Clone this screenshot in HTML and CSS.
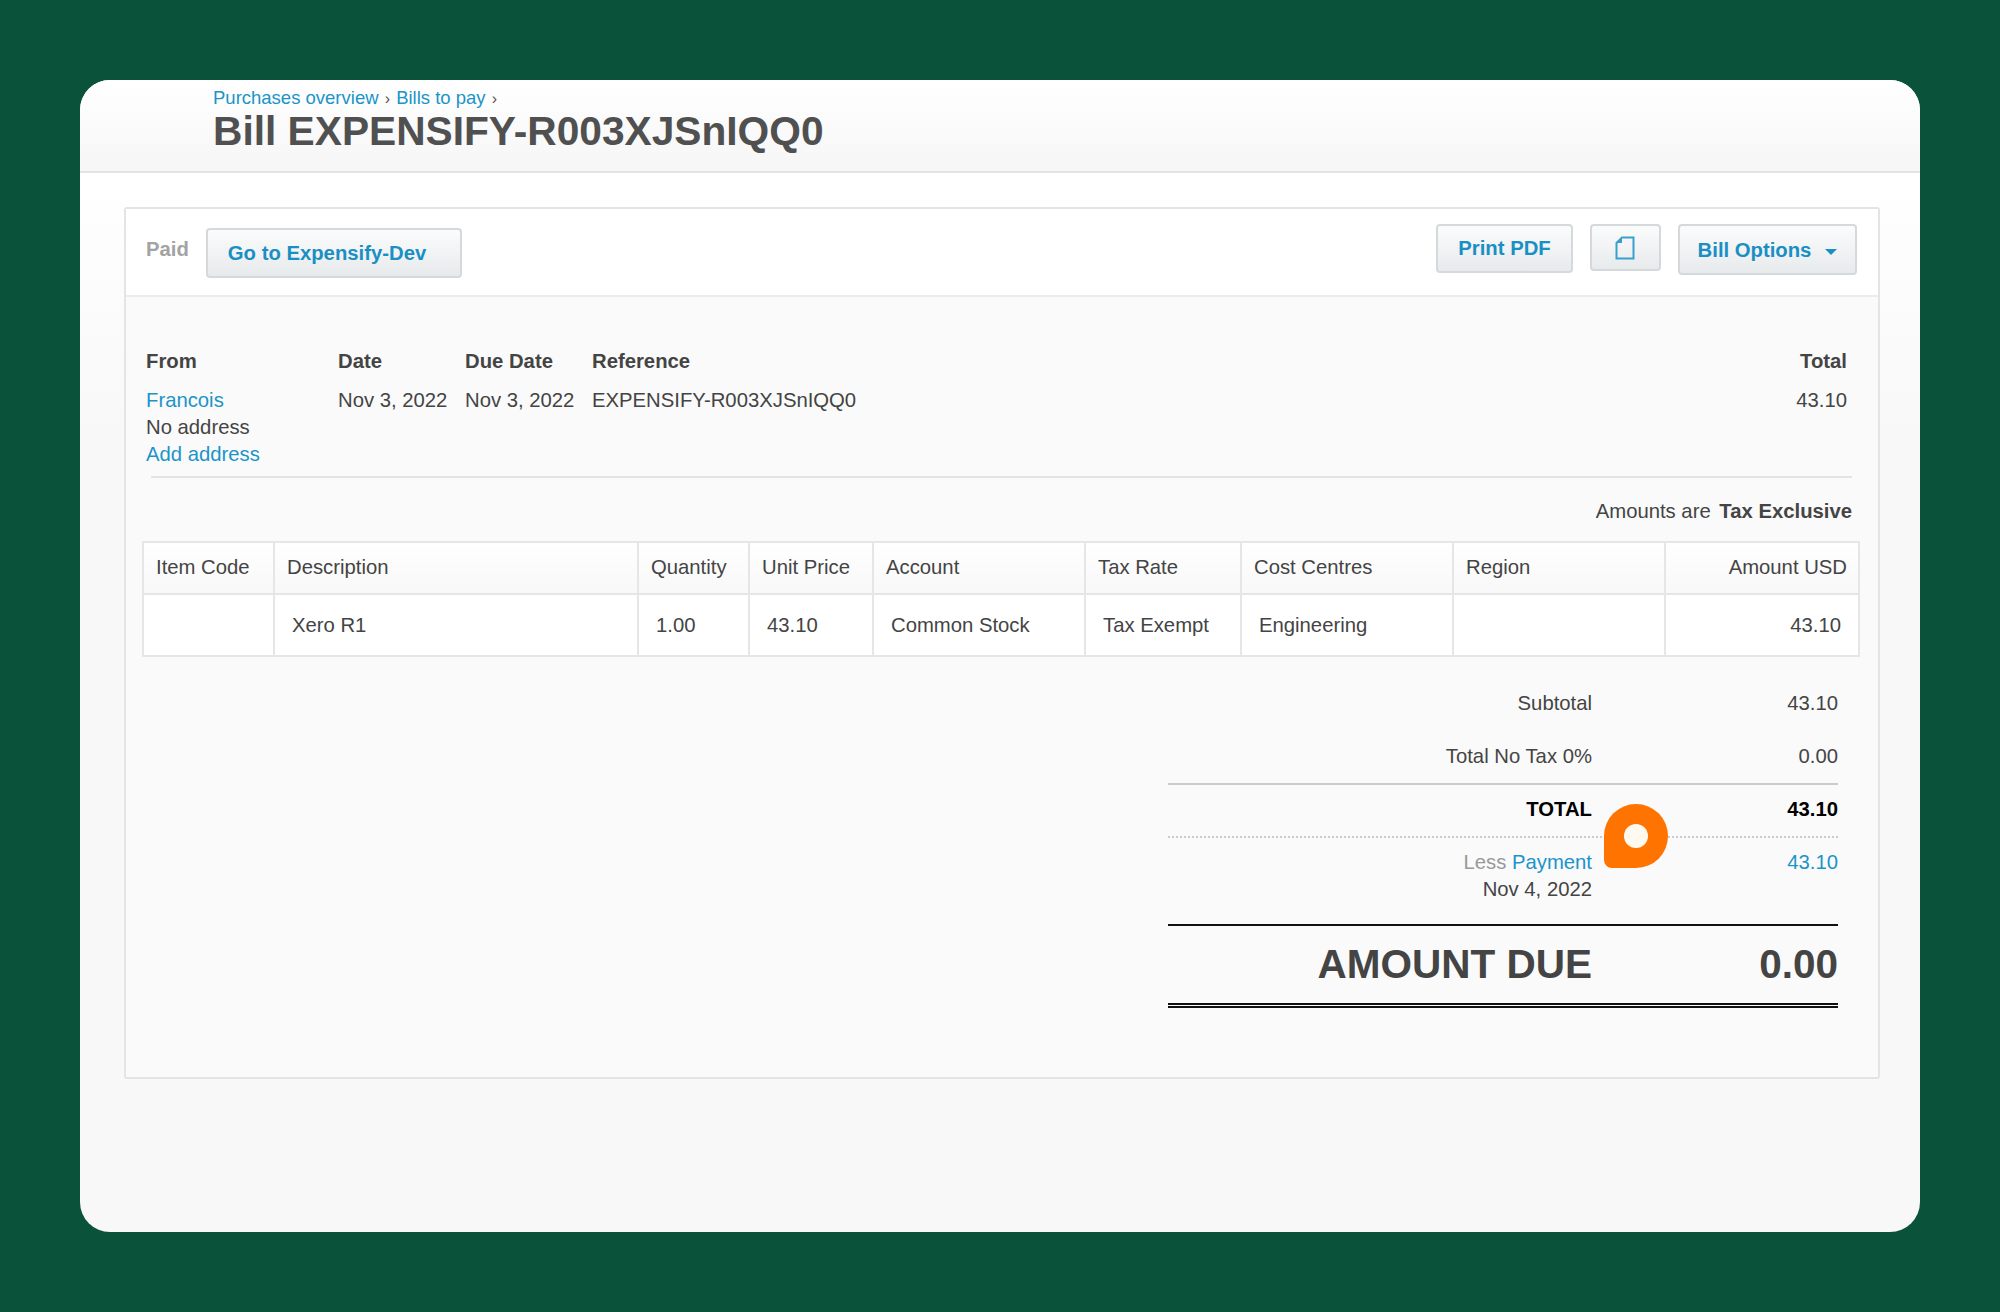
FILE: index.html
```html
<!DOCTYPE html>
<html lang="en">
<head>
    <meta charset="UTF-8">
    <title>Bill EXPENSIFY-R003XJSnIQQ0</title>
    <link rel="stylesheet" href="styles.css">
</head>
<body>
    <div class="window">
        <div class="page-head">
            <div class="crumbs"><a>Purchases overview</a> <span class="sep">›</span> <a>Bills to pay</a> <span class="sep">›</span></div>
            <h1>Bill EXPENSIFY-R003XJSnIQQ0</h1>
        </div>
        <div class="page-body">
            <div class="panel">
                <div class="toolbar">
                    <div class="toolbar-left">
                        <span class="status">Paid</span>
                        <button class="btn btn-go">Go to Expensify-Dev</button>
                    </div>
                    <div class="toolbar-right">
                        <button class="btn btn-print">Print PDF</button>
                        <button class="btn btn-icon" aria-label="Copy">
                            <svg width="20" height="24" viewBox="0 0 20 24"><path d="M7 1.5H18.5V22.5H1.5V7Z" fill="none" stroke="#3a9fcf" stroke-width="2"/><path d="M7 1.5V7H1.5Z" fill="#3a9fcf"/></svg>
                        </button>
                        <button class="btn btn-options">Bill Options<span class="caret"></span></button>
                    </div>
                </div>
                <div class="details">
                    <div class="meta">
                        <div class="meta-col col-from">
                            <div class="meta-label">From</div>
                            <a>Francois</a>
                            <div>No address</div>
                            <a>Add address</a>
                        </div>
                        <div class="meta-col col-date">
                            <div class="meta-label">Date</div>
                            <div>Nov 3, 2022</div>
                        </div>
                        <div class="meta-col col-due">
                            <div class="meta-label">Due Date</div>
                            <div>Nov 3, 2022</div>
                        </div>
                        <div class="meta-col col-ref">
                            <div class="meta-label">Reference</div>
                            <div>EXPENSIFY-R003XJSnIQQ0</div>
                        </div>
                        <div class="meta-col col-total">
                            <div class="meta-label">Total</div>
                            <div>43.10</div>
                        </div>
                    </div>
                    <div class="meta-rule"></div>
                    <div class="tax-note">Amounts are <strong>Tax Exclusive</strong></div>
                    <table class="items">
                        <colgroup>
                            <col class="c-code"><col class="c-desc"><col class="c-qty"><col class="c-price"><col class="c-acct"><col class="c-tax"><col class="c-cost"><col class="c-region"><col class="c-amount">
                        </colgroup>
                        <thead>
                            <tr>
                                <th>Item Code</th>
                                <th>Description</th>
                                <th>Quantity</th>
                                <th>Unit Price</th>
                                <th>Account</th>
                                <th>Tax Rate</th>
                                <th>Cost Centres</th>
                                <th>Region</th>
                                <th class="right">Amount USD</th>
                            </tr>
                        </thead>
                        <tbody>
                            <tr>
                                <td></td>
                                <td>Xero R1</td>
                                <td>1.00</td>
                                <td>43.10</td>
                                <td>Common Stock</td>
                                <td>Tax Exempt</td>
                                <td>Engineering</td>
                                <td></td>
                                <td class="right">43.10</td>
                            </tr>
                        </tbody>
                    </table>
                    <div class="summary">
                        <div class="sum-row sum-plain"><span>Subtotal</span><span>43.10</span></div>
                        <div class="sum-row sum-plain sum-tax"><span>Total No Tax 0%</span><span>0.00</span></div>
                        <div class="sum-row sum-total"><span>TOTAL</span><span>43.10</span></div>
                        <div class="sum-row sum-pay">
                            <span><span class="muted">Less</span> <a>Payment</a><br>Nov 4, 2022</span>
                            <a>43.10</a>
                        </div>
                        <div class="sum-row sum-due"><span>AMOUNT DUE</span><span>0.00</span></div>
                        <div class="pin"><div class="pin-dot"></div></div>
                    </div>
                </div>
            </div>
        </div>
    </div>
</body>
</html>
```

FILE: styles.css
```css
* {
    box-sizing: border-box;
}

html, body {
    height: 100%;
}

body {
    margin: 0;
    padding: 80px;
    background-color: #0a533a;
    font-family: "Liberation Sans", Arial, sans-serif;
    font-size: 20.3px;
    line-height: 27px;
    color: #444;
}

a {
    color: #1a94c9;
}

.window {
    height: 1152px;
    border-radius: 30px;
    overflow: hidden;
    background-color: #f8f8f8;
}

.page-head {
    height: 93px;
    padding: 8px 0 0 133px;
    background: linear-gradient(#fff, #f6f6f6);
    border-bottom: 2px solid #e2e4e4;
}

.crumbs {
    font-size: 18.5px;
    line-height: 20px;
    height: 20px;
}

.sep {
    color: #555;
    font-size: 16px;
    margin: 0 1px;
}

h1 {
    margin: 0;
    font-size: 40.7px;
    line-height: 46px;
    font-weight: bold;
    color: #505050;
}

.page-body {
    padding: 34px 40px 0 44px;
    height: 908px;
    background: linear-gradient(#fff, #f8f8f8 260px);
}

.panel {
    height: 872px;
    border: 2px solid #e4e4e4;
    border-radius: 3px;
    background-color: #fafafa;
}

.toolbar {
    height: 88px;
    padding: 15px 21px 0 20px;
    display: flex;
    justify-content: space-between;
    align-items: flex-start;
    background-color: #fff;
    border-bottom: 2px solid #ececec;
}

.toolbar-left {
    display: flex;
    align-items: flex-start;
}

.toolbar-right {
    display: flex;
    gap: 17px;
}

.status {
    margin: 12px 17px 0 0;
    font-weight: bold;
    color: #a3a3a3;
}

.btn {
    padding: 0;
    display: flex;
    align-items: center;
    justify-content: center;
    border: 2px solid #d5d9dc;
    border-radius: 4px;
    background: linear-gradient(#fbfcfc, #e7eaec);
    font-family: inherit;
    font-size: 20.3px;
    font-weight: bold;
    color: #1a8fc4;
}

.btn-go {
    width: 256px;
    height: 50px;
    margin-top: 4px;
    justify-content: flex-start;
    padding-left: 20px;
}

.btn-print {
    width: 137px;
    height: 49px;
}

.btn-icon {
    width: 71px;
    height: 47px;
}

.btn-icon svg {
    margin-right: 2px;
}

.btn-options {
    width: 179px;
    height: 51px;
    padding-top: 2px;
}

.caret {
    margin: 3px 0 0 14px;
    border-left: 6px solid transparent;
    border-right: 6px solid transparent;
    border-top: 6px solid #1a8fc4;
}

.details {
    padding: 51px 20px 0 17px;
}

.meta {
    display: flex;
    padding: 0 11px 8px 3px;
}

.meta-label {
    margin-bottom: 12px;
    font-weight: bold;
}

.col-from {
    width: 192px;
}

.col-date,
.col-due {
    width: 127px;
}

.col-ref {
    flex: 1;
}

.col-total {
    text-align: right;
}

.meta-col a {
    display: block;
}

.meta-rule {
    height: 2px;
    margin: 0 6px 0 8px;
    background-color: #e4e4e4;
}

.tax-note {
    margin: 20px 6px 16px 0;
    text-align: right;
}

.tax-note strong {
    margin-left: 3px;
}

.items {
    width: 1716px;
    margin-left: -1px;
    table-layout: fixed;
    border-collapse: collapse;
    border: 2px solid #e2e2e2;
    background-color: #fff;
}

.c-code { width: 131px; }
.c-desc { width: 364px; }
.c-qty { width: 111px; }
.c-price { width: 124px; }
.c-acct { width: 212px; }
.c-tax { width: 156px; }
.c-cost { width: 212px; }
.c-region { width: 212px; }
.c-amount { width: 194px; }

.items th {
    height: 52px;
    padding: 0 12px 2px;
    border: 2px solid #e6e6e6;
    background: linear-gradient(#fff, #f8f8f8);
    font-weight: normal;
    text-align: left;
}

.items td {
    height: 62px;
    padding: 0 17px;
    border: 2px solid #e6e6e6;
}

.items .right {
    text-align: right;
    padding-right: 11px;
}

.items td.right {
    padding-right: 17px;
}

.summary {
    position: relative;
    width: 670px;
    margin: 20px 0 0 1025px;
}

.sum-row {
    display: flex;
    justify-content: space-between;
}

.sum-row > :first-child {
    width: 424px;
    text-align: right;
}

.sum-plain {
    height: 53px;
    padding-top: 13px;
}

.sum-tax {
    height: 55px;
    border-bottom: 2px solid #ccc;
}

.sum-total {
    height: 53px;
    padding-top: 11px;
    font-weight: bold;
    color: #000;
    border-bottom: 2px dotted #ccc;
}

.sum-pay {
    height: 88px;
    padding-top: 11px;
    border-bottom: 2px solid #111;
}

.muted {
    color: #999;
}

.sum-due {
    height: 82px;
    padding-top: 15px;
    font-size: 40.5px;
    line-height: 46px;
    font-weight: bold;
    border-bottom: 5px double #111;
}

.pin {
    position: absolute;
    left: 436px;
    top: 127px;
    width: 64px;
    height: 64px;
    display: flex;
    align-items: center;
    justify-content: center;
    border-radius: 50% 50% 50% 8px;
    background-color: #ff7300;
}

.pin-dot {
    width: 24px;
    height: 24px;
    border-radius: 50%;
    background-color: #fff9f0;
}
```
